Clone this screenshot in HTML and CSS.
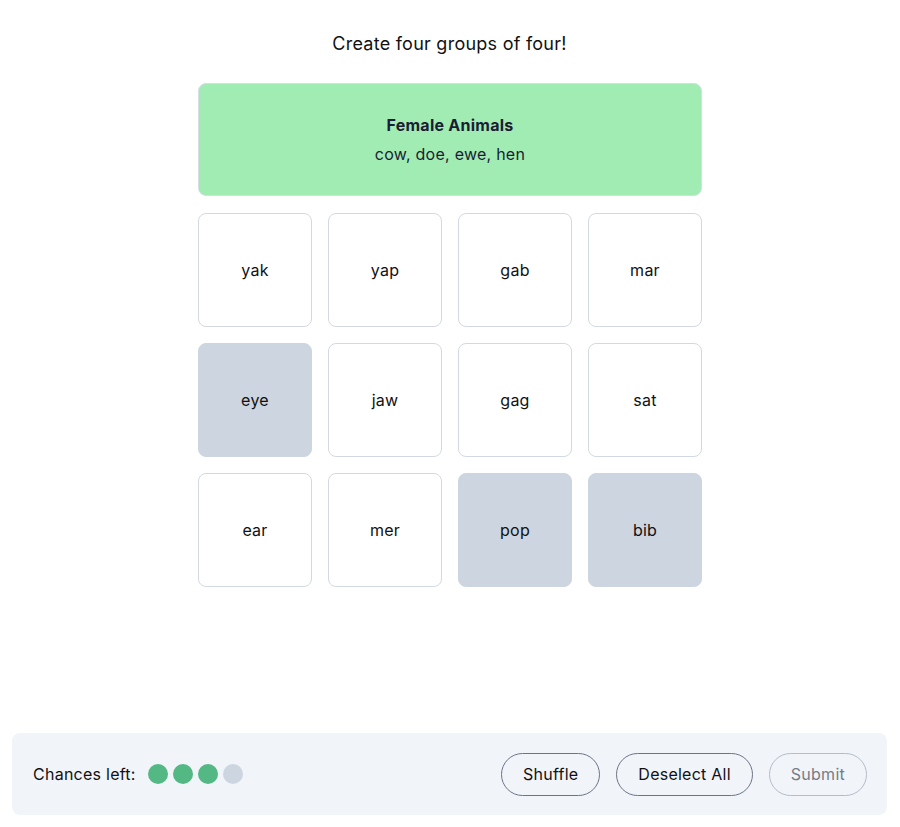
FILE: index.html
```html
<!DOCTYPE html>
<html>
<head>
<meta charset="utf-8">
<link rel="stylesheet" href="styles.css">
</head>
<body>
<div class="page">
  <main class="game">
    <h1 class="title">Create four groups of four!</h1>
    <div class="board">
      <div class="solved">
        <div class="solved-name">Female Animals</div>
        <div class="solved-words">cow, doe, ewe, hen</div>
      </div>
      <div class="grid">
        <button class="tile">yak</button>
        <button class="tile">yap</button>
        <button class="tile">gab</button>
        <button class="tile">mar</button>
        <button class="tile selected">eye</button>
        <button class="tile">jaw</button>
        <button class="tile">gag</button>
        <button class="tile">sat</button>
        <button class="tile">ear</button>
        <button class="tile">mer</button>
        <button class="tile selected">pop</button>
        <button class="tile selected">bib</button>
      </div>
    </div>
  </main>
  <footer class="bar">
    <div class="chances">
      <span class="chances-label">Chances left:</span>
      <span class="dots">
        <span class="dot on"></span>
        <span class="dot on"></span>
        <span class="dot on"></span>
        <span class="dot"></span>
      </span>
    </div>
    <div class="actions">
      <button class="pill">Shuffle</button>
      <button class="pill">Deselect All</button>
      <button class="pill disabled">Submit</button>
    </div>
  </footer>
</div>
</body>
</html>
```
FILE: styles.css
```css
* { box-sizing: border-box; }
html, body { margin: 0; padding: 0; background: #ffffff; }
body {
  font-family: Inter, "Noto Sans", sans-serif;
  color: #111111;
  letter-spacing: 0.25px;
}
.page {
  height: 827px;
  display: flex;
  flex-direction: column;
  justify-content: space-between;
  padding: 0 13px 12px 12px;
}
.game {
  display: flex;
  flex-direction: column;
  align-items: center;
  padding-top: 32px;
}
.title {
  margin: 0;
  font-size: 18px;
  font-weight: 400;
  line-height: 24px;
  color: #111;
}
.board {
  width: 504px;
  margin-top: 27px;
  margin-left: 1px;
  display: flex;
  flex-direction: column;
  gap: 17px;
}
.solved {
  height: 113px;
  background: #a0ecb2;
  border: 1px solid #d5dde6;
  border-radius: 8px;
  display: flex;
  flex-direction: column;
  align-items: center;
  justify-content: center;
  gap: 9px;
  color: #1a1d35;
  padding-bottom: 1px;
}
.solved-name {
  font-weight: 700;
  font-size: 16px;
  line-height: 20px;
}
.solved-words {
  font-size: 16px;
  line-height: 20px;
}
.grid {
  display: grid;
  grid-template-columns: repeat(4, 114px);
  grid-auto-rows: 114px;
  gap: 16px;
}
.tile {
  font-family: Inter, "Noto Sans", sans-serif;
  font-size: 16px;
  letter-spacing: 0.25px;
  color: #111;
  background: #ffffff;
  border: 1px solid #d3d9e3;
  border-radius: 8px;
  padding: 0;
}
.tile.selected {
  background: #cdd5e0;
  border-color: #cdd5e0;
}
.bar {
  height: 82px;
  background: #f1f4f9;
  border-radius: 8px;
  display: flex;
  align-items: center;
  justify-content: space-between;
  padding: 0 20px 0 21px;
}
.chances {
  display: flex;
  align-items: center;
  gap: 12px;
}
.chances-label {
  font-size: 16px;
  color: #111;
}
.dots {
  display: flex;
  gap: 5px;
}
.dot {
  width: 20px;
  height: 20px;
  border-radius: 50%;
  background: #cdd5e0;
}
.dot.on { background: #53b884; }
.actions {
  display: flex;
  gap: 16px;
}
.pill {
  font-family: Inter, "Noto Sans", sans-serif;
  font-size: 16px;
  letter-spacing: 0.25px;
  color: #111;
  background: transparent;
  height: 43px;
  padding: 0 21px;
  border: 1px solid #6b7588;
  border-radius: 999px;
}
.pill.disabled {
  color: #767c86;
  border-color: #b4bcc8;
}
```
